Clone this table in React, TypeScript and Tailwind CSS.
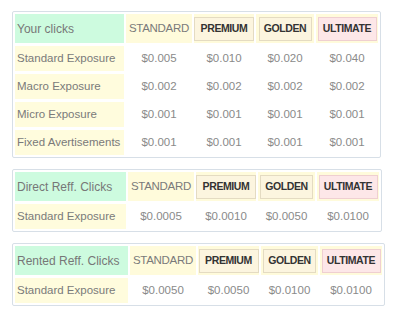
const tiers = [
  { name: "PREMIUM", badge: "w-[60px] border-[#e4dbc2] bg-[#fcf5df]" },
  { name: "GOLDEN", badge: "w-[53px] border-[#e4dbc2] bg-[#fcf5df]" },
  { name: "ULTIMATE", badge: "w-[59px] border-[#efcfd1] bg-[#fde7e8]" },
];

type Table = {
  title: string;
  cols: string;
  rows: { label: string; values: string[] }[];
};

const tables: Table[] = [
  {
    title: "Your clicks",
    cols: "grid-cols-[109px_66px_60px_58px_62px]",
    rows: [
      { label: "Standard Exposure", values: ["$0.005", "$0.010", "$0.020", "$0.040"] },
      { label: "Macro Exposure", values: ["$0.002", "$0.002", "$0.002", "$0.002"] },
      { label: "Micro Exposure", values: ["$0.001", "$0.001", "$0.001", "$0.001"] },
      { label: "Fixed Avertisements", values: ["$0.001", "$0.001", "$0.001", "$0.001"] },
    ],
  },
  {
    title: "Direct Reff. Clicks",
    cols: "grid-cols-[111px_66px_60px_57px_62px]",
    rows: [{ label: "Standard Exposure", values: ["$0.0005", "$0.0010", "$0.0050", "$0.0100"] }],
  },
  {
    title: "Rented Reff. Clicks",
    cols: "grid-cols-[113px_66px_61px_57px_62px]",
    rows: [{ label: "Standard Exposure", values: ["$0.0050", "$0.0050", "$0.0100", "$0.0100"] }],
  },
];

function RateTable({ table }: { table: Table }) {
  return (
    <div className="self-start rounded-[2px] border border-[#d7dfe7] bg-white p-[2px]">
      <div className={`grid ${table.cols} gap-x-[2px] gap-y-[3px]`}>
        <div className="flex h-[29px] items-center bg-[#cdfbdf] pl-[2px] text-[12px] text-[#777]">
          {table.title}
        </div>
        <div className="flex items-center justify-center bg-[#fffbdb] text-[11.5px] tracking-[-0.3px] text-[#7a7a7a]">
          STANDARD
        </div>
        {tiers.map((tier) => (
          <div key={tier.name} className="flex items-center justify-center bg-[#fffbdb]">
            <span
              className={`flex h-[24px] items-center justify-center border text-[10.5px] font-bold tracking-[-0.4px] text-[#333] ${tier.badge}`}
            >
              {tier.name}
            </span>
          </div>
        ))}
        {table.rows.map((row) => (
          <div key={row.label} className="contents">
            <div className="flex h-[25px] items-center bg-[#fffcdd] pl-[2px] text-[11.5px] text-[#7a7a7a]">
              {row.label}
            </div>
            {row.values.map((value, i) => (
              <div key={i} className="flex items-center justify-center text-[11.5px] text-[#8a8a8a]">
                {value}
              </div>
            ))}
          </div>
        ))}
      </div>
    </div>
  );
}

export default function App() {
  return (
    <div className="flex h-[319px] w-[400px] flex-col gap-[11px] bg-white pl-[12px] pt-[11px] font-['Liberation_Sans',Arial,sans-serif]">
      {tables.map((table) => (
        <RateTable key={table.title} table={table} />
      ))}
    </div>
  );
}
